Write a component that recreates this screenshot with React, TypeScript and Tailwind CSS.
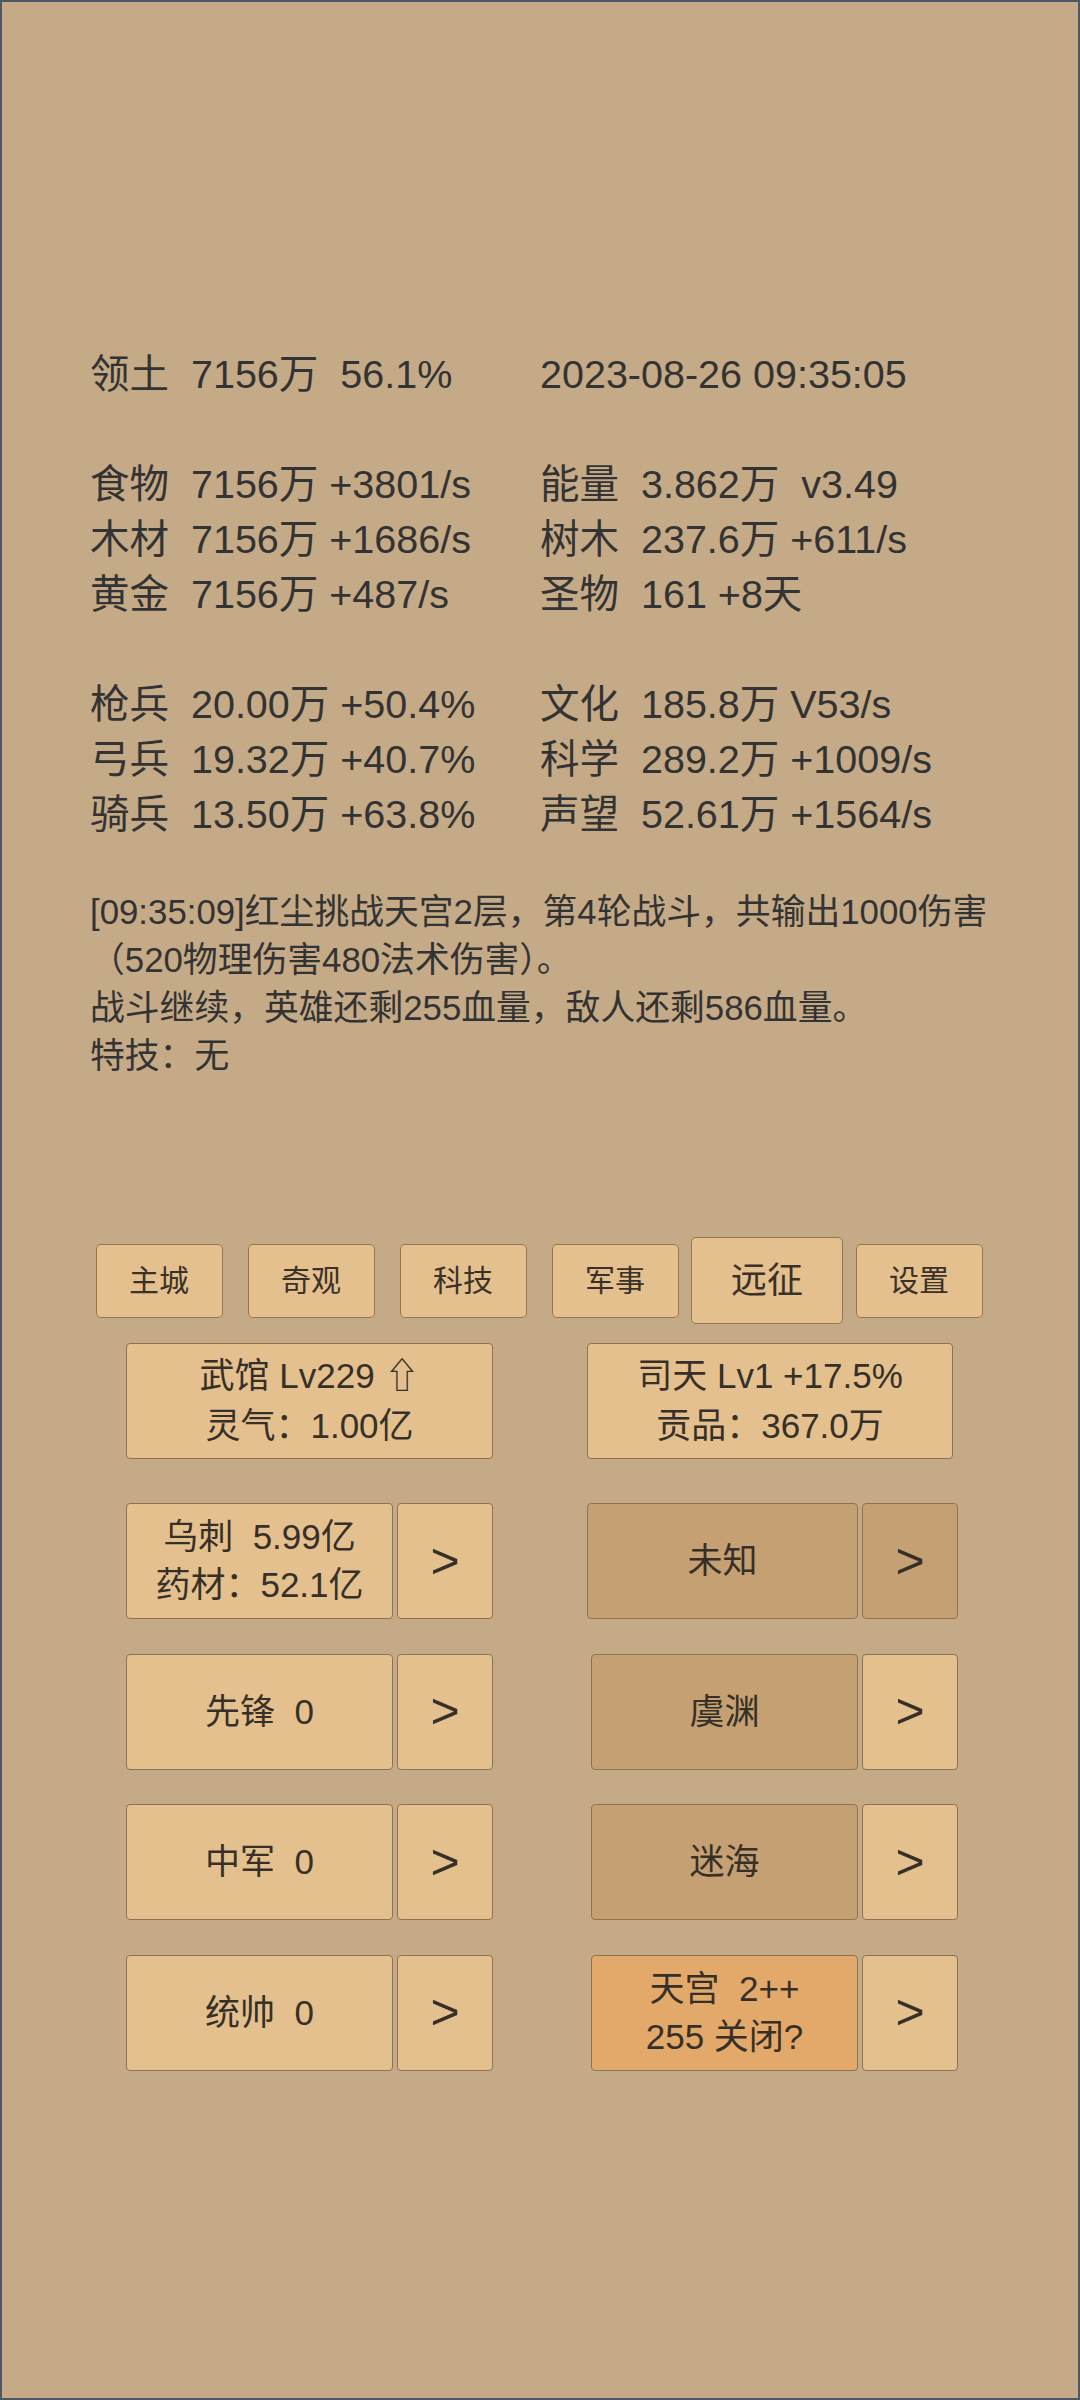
import { Fragment } from 'react'

const stats: [string, string][] = [
  ['领土  7156万  56.1%', '2023-08-26 09:35:05'],
  ['', ''],
  ['食物  7156万 +3801/s', '能量  3.862万  v3.49'],
  ['木材  7156万 +1686/s', '树木  237.6万 +611/s'],
  ['黄金  7156万 +487/s', '圣物  161 +8天'],
  ['', ''],
  ['枪兵  20.00万 +50.4%', '文化  185.8万 V53/s'],
  ['弓兵  19.32万 +40.7%', '科学  289.2万 +1009/s'],
  ['骑兵  13.50万 +63.8%', '声望  52.61万 +1564/s'],
]

const tabs = ['主城', '奇观', '科技', '军事', '远征', '设置']

function Tab({ label, active }: { label: string; active?: boolean }) {
  if (active) {
    return (
      <div className="w-[152px] h-[87px] flex items-center justify-center rounded-[5px] border border-[#94764f] bg-[#e4c08e] text-[36px] text-[#3a3228]">
        {label}
      </div>
    )
  }
  return (
    <div className="w-[127px] h-[74px] flex items-center justify-center rounded-[5px] border border-[#94764f] bg-[#e4c08e] text-[30px] text-[#3a3228]">
      {label}
    </div>
  )
}

function Arrow({ dark }: { dark?: boolean }) {
  return (
    <div
      className={`w-[96px] h-[116px] flex items-center justify-center rounded-[4px] border border-[#8f7250] text-[50px] text-[#363028] ${
        dark ? 'bg-[#c4a073]' : 'bg-[#e4c08e]'
      }`}
    >
      &gt;
    </div>
  )
}

function Main({ lines, tone, wide }: { lines: string[]; tone: 'light' | 'dark' | 'orange'; wide?: boolean }) {
  const bg = tone === 'light' ? 'bg-[#e4c08e]' : tone === 'dark' ? 'bg-[#c4a073]' : 'bg-[#e2a96a]'
  return (
    <div
      className={`${wide ? 'w-[271px]' : 'w-[267px]'} h-[116px] flex flex-col items-center justify-center rounded-[4px] border border-[#8f7250] text-[35px] leading-[48px] text-[#363028] whitespace-pre ${bg}`}
    >
      {lines.map((l, i) => (
        <div key={i}>{l}</div>
      ))}
    </div>
  )
}

export default function App() {
  return (
    <div className="w-[1080px] h-[2400px] border-2 border-[#4e5667] bg-[#c5aa87] font-['Liberation_Sans','Noto_Sans_CJK_SC','DejaVu_Sans',sans-serif] overflow-hidden">
      <div className="pt-[345px] pl-[88px] pr-[76px]">
        <div className="grid grid-cols-[450px_1fr] text-[39.5px] leading-[55px] whitespace-pre text-[#333333]">
          {stats.map(([a, b], i) => (
            <Fragment key={i}>
              <div className="h-[55px]">{a}</div>
              <div className="h-[55px]">{b}</div>
            </Fragment>
          ))}
        </div>

        <div className="mt-[46px] text-[34.8px] leading-[48px] text-[#333333]">
          <div>[09:35:09]红尘挑战天宫2层，第4轮战斗，共输出1000伤害（520物理伤害480法术伤害）。</div>
          <div>战斗继续，英雄还剩255血量，敌人还剩586血量。</div>
          <div>特技：无</div>
        </div>
      </div>

      <div className="mt-[157px] ml-[81px] w-[912px] flex">
        {tabs.map((t) => (
          <div key={t} className="flex-1 h-[87px] flex items-center justify-center">
            <Tab label={t} active={t === '远征'} />
          </div>
        ))}
      </div>

      <div className="mt-[19px] pl-[124px] flex gap-[94px]">
        <div className="w-[367px] flex flex-col">
          <div className="h-[116px] flex flex-col items-center justify-center rounded-[4px] border border-[#8f7250] bg-[#e4c08e] text-[35px] leading-[50px] text-[#363028] whitespace-pre">
            <div>武馆 Lv229 ⇧</div>
            <div>灵气：1.00亿</div>
          </div>
          <div className="mt-[44px] flex flex-col gap-[34.5px]">
            <div className="flex gap-[4px]">
              <Main lines={['乌刺  5.99亿', '药材：52.1亿']} tone="light" />
              <Arrow />
            </div>
            <div className="flex gap-[4px]">
              <Main lines={['先锋  0']} tone="light" />
              <Arrow />
            </div>
            <div className="flex gap-[4px]">
              <Main lines={['中军  0']} tone="light" />
              <Arrow />
            </div>
            <div className="flex gap-[4px]">
              <Main lines={['统帅  0']} tone="light" />
              <Arrow />
            </div>
          </div>
        </div>

        <div className="w-[371px] flex flex-col">
          <div className="w-[366px] h-[116px] flex flex-col items-center justify-center rounded-[4px] border border-[#8f7250] bg-[#e4c08e] text-[35px] leading-[50px] text-[#363028] whitespace-pre">
            <div>司天 Lv1 +17.5%</div>
            <div>贡品：367.0万</div>
          </div>
          <div className="mt-[44px] flex flex-col gap-[34.5px]">
            <div className="flex justify-end gap-[4px]">
              <Main lines={['未知']} tone="dark" wide />
              <Arrow dark />
            </div>
            <div className="flex justify-end gap-[4px]">
              <Main lines={['虞渊']} tone="dark" />
              <Arrow />
            </div>
            <div className="flex justify-end gap-[4px]">
              <Main lines={['迷海']} tone="dark" />
              <Arrow />
            </div>
            <div className="flex justify-end gap-[4px]">
              <Main lines={['天宫  2++', '255 关闭?']} tone="orange" />
              <Arrow />
            </div>
          </div>
        </div>
      </div>
    </div>
  )
}
